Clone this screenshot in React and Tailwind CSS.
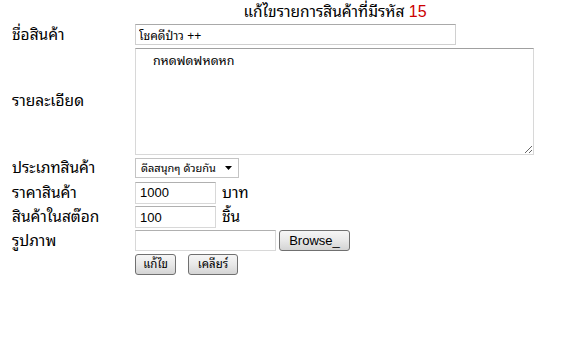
import React from "react";

const btn =
  "box-border h-[21px] rounded-[3px] border border-[#707070] bg-gradient-to-b from-[#f6f6f6] via-[#e8e8e8] to-[#d4d4d4] leading-none text-black";

export default function App() {
  return (
    <div className="w-[571px] h-[346px] bg-white text-black font-['Liberation_Sans','Noto_Sans_Thai_Looped',sans-serif]">
      <div className="flex h-[23px] items-center">
        <div className="w-[135px]" />
        <div className="w-[400px] text-center text-[15.5px] leading-none pt-[1px]">
          แก้ไขรายการสินค้าที่มีรหัส <span className="text-[#cc0000] text-[16px]">15</span>
        </div>
      </div>
      <div className="flex h-[23px] items-center">
        <div className="w-[135px] pl-[12px] text-[15.5px]">ชื่อสินค้า</div>
        <input
          className="box-border h-[21px] w-[321px] border border-[#d0d0d0] border-t-[#a9a9a9] px-[3px] text-[12px] outline-none"
          defaultValue="โชคดีป๋าว ++"
        />
      </div>
      <div className="flex h-[110px] items-center">
        <div className="w-[135px] pl-[12px] text-[15.5px]">รายละเอียด</div>
        <textarea
          className="box-border h-[107px] w-[399px] resize border border-[#d8d8d8] border-t-[#a0a0a0] px-[3px] pt-[3px] text-[12.5px] outline-none"
          defaultValue={"    กหดฟดฟหดหก"}
        />
      </div>
      <div className="flex h-[24px] items-center">
        <div className="w-[135px] pl-[12px] text-[15.5px]">ประเภทสินค้า</div>
        <div className="box-border flex h-[20px] w-[104px] items-center justify-between border border-[#c4c4c4] bg-white pl-[5px] pr-[6px] text-[11px]">
          <span>ดีลสนุกๆ ด้วยกัน</span>
          <svg width="7" height="4" viewBox="0 0 7 4"><path d="M0 0h7L3.5 4z" fill="#000" /></svg>
        </div>
      </div>
      <div className="flex h-[25px] items-center">
        <div className="w-[135px] pl-[12px] text-[15.5px]">ราคาสินค้า</div>
        <input
          className="box-border h-[22px] w-[81px] border border-[#d8d8d8] border-t-[#b0b0b0] px-[4px] text-[13px] outline-none"
          defaultValue="1000"
        />
        <span className="ml-[6px] text-[15.5px]">บาท</span>
      </div>
      <div className="flex h-[24px] items-center">
        <div className="w-[135px] pl-[12px] text-[15.5px]">สินค้าในสต๊อก</div>
        <input
          className="box-border h-[22px] w-[81px] border border-[#d8d8d8] border-t-[#b0b0b0] px-[4px] text-[13px] outline-none"
          defaultValue="100"
        />
        <span className="ml-[6px] text-[15.5px]">ชิ้น</span>
      </div>
      <div className="flex h-[23px] items-center">
        <div className="w-[135px] pl-[12px] text-[15.5px]">รูปภาพ</div>
        <div className="box-border h-[21px] w-[141px] border border-[#d8d8d8] border-t-[#b0b0b0]" />
        <button className={`${btn} ml-[3px] w-[71px] text-[13px]`}>Browse_</button>
      </div>
      <div className="flex h-[25px] items-center">
        <div className="w-[135px]" />
        <button className={`${btn} w-[41px] text-[11.5px]`}>แก้ไข</button>
        <button className={`${btn} ml-[12px] w-[50px] text-[11.5px]`}>เคลียร์</button>
      </div>
    </div>
  );
}
